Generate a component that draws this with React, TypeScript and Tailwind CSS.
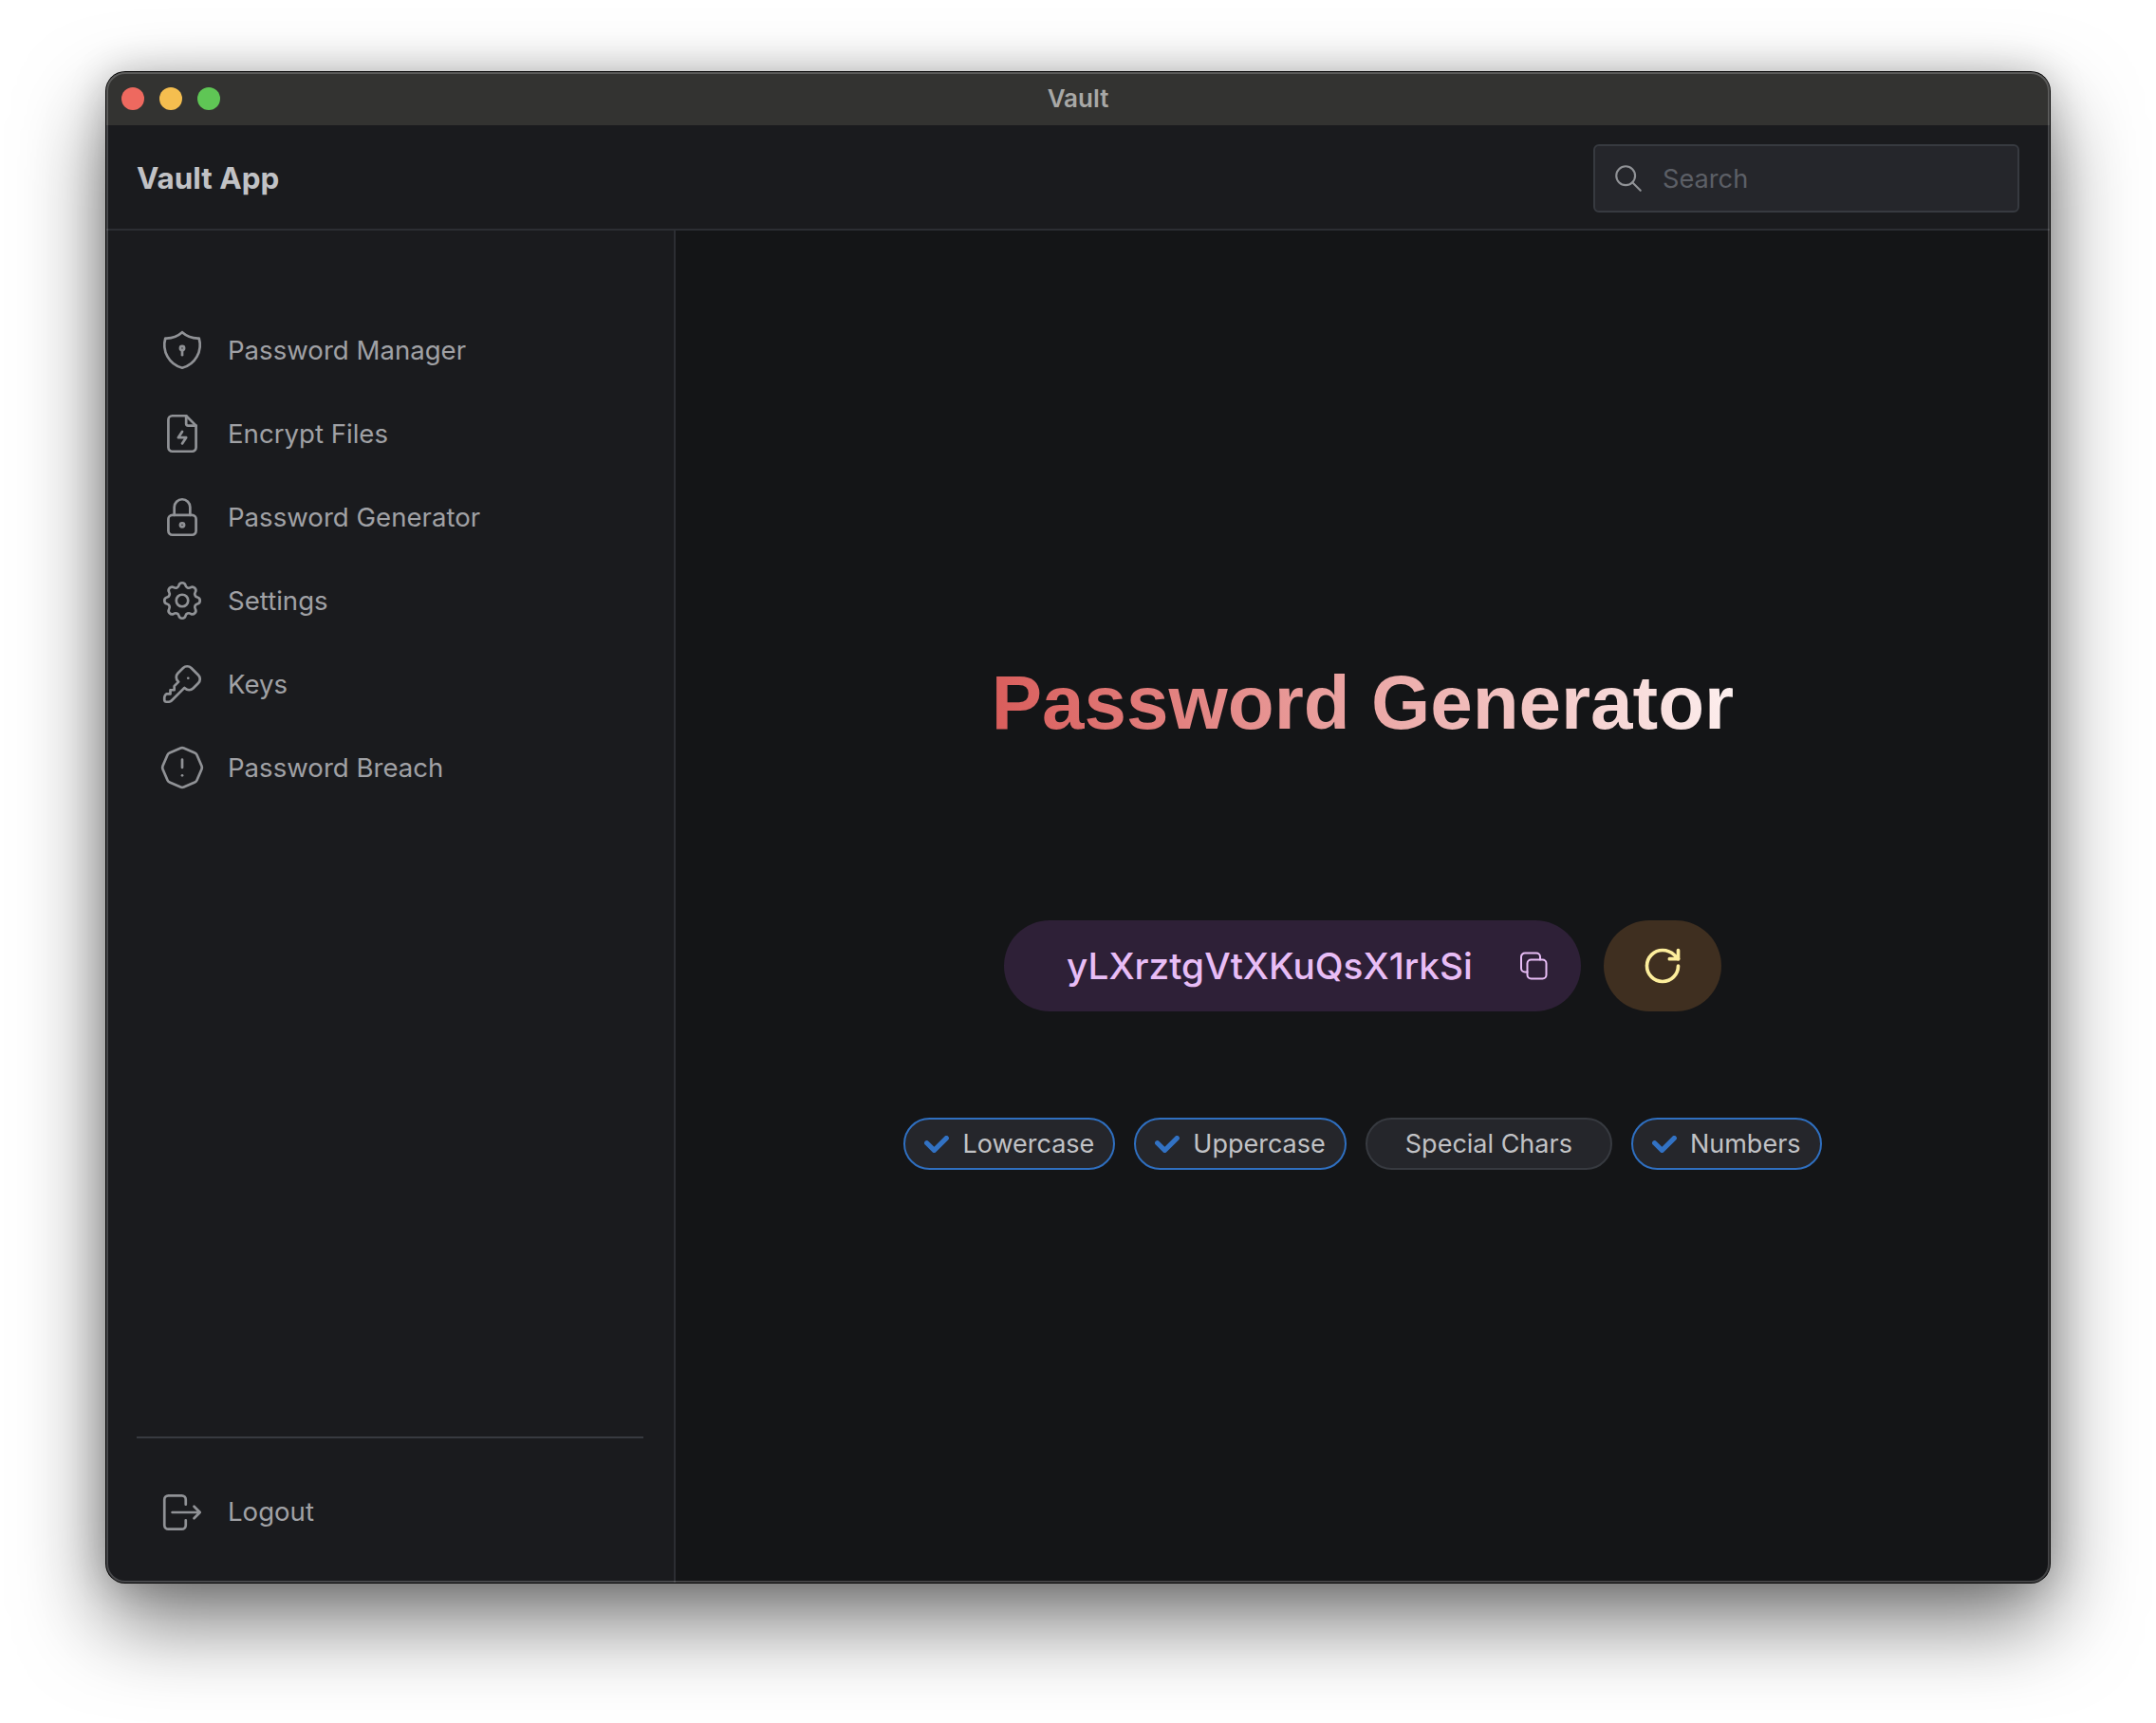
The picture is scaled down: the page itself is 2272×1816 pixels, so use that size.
import React from "react";
import { TbShieldLock, TbLock, TbSettings, TbKey, TbAlertOctagon, TbSearch } from "react-icons/tb";

const FileBolt = ({ className }: { className?: string }) => (
  <svg viewBox="0 0 24 24" fill="none" stroke="currentColor" strokeWidth={1.3} strokeLinecap="round" strokeLinejoin="round" className={className}>
    <path d="M14 3v4a1 1 0 0 0 1 1h4" />
    <path d="M17 21h-10a2 2 0 0 1 -2 -2v-14a2 2 0 0 1 2 -2h7l5 5v11a2 2 0 0 1 -2 2z" />
    <path d="M12 11l-2 3h4l-2 3" />
  </svg>
);

const LogoutIcon = ({ className }: { className?: string }) => (
  <svg viewBox="0 0 24 24" fill="none" stroke="currentColor" strokeWidth={1.3} strokeLinecap="round" strokeLinejoin="round" className={className}>
    <path d="M13.8 8v-2.5a2 2 0 0 0 -2 -2h-6.8a2 2 0 0 0 -2 2v13a2 2 0 0 0 2 2h6.8a2 2 0 0 0 2 -2v-2.5" />
    <path d="M7 12h14l-3 -3m0 6l3 -3" />
  </svg>
);

const CopyIcon = () => (
  <svg viewBox="0 0 30 30" fill="none" stroke="currentColor" strokeWidth={2} strokeLinecap="round" strokeLinejoin="round" className="w-[30px] h-[30px]">
    <rect x="8.5" y="8.5" width="20" height="20" rx="4" />
    <path d="M22 8.5v-3a4 4 0 0 0 -4 -4h-12a4 4 0 0 0 -4 4v12a4 4 0 0 0 4 4h2.5" />
  </svg>
);

const RefreshIcon = () => (
  <svg viewBox="0 0 24 24" fill="none" stroke="currentColor" strokeWidth={2} strokeLinecap="round" strokeLinejoin="round" className="w-[44px] h-[44px]">
    <path d="M21 12a9 9 0 1 1-9-9c2.52 0 4.93 1 6.74 2.74L21 8" />
    <path d="M21 3v5h-5" />
  </svg>
);

const Check = () => (
  <svg viewBox="0 0 10 7" className="w-[26px] h-[18px] shrink-0 text-[#3272c4]" fill="currentColor">
    <path d="M4 4.586L1.707 2.293A1 1 0 10.293 3.707l3 3a.997.997 0 001.414 0l5-5A1 1 0 108.293.293L4 4.586z" />
  </svg>
);

const iconCls = "w-[50px] h-[50px] shrink-0";
const nav = [
  { label: "Password Manager", icon: <TbShieldLock className={iconCls} strokeWidth={1.3} /> },
  { label: "Encrypt Files", icon: <FileBolt className={iconCls} /> },
  { label: "Password Generator", icon: <TbLock className={iconCls} strokeWidth={1.3} /> },
  { label: "Settings", icon: <TbSettings className={iconCls} strokeWidth={1.3} /> },
  { label: "Keys", icon: <TbKey className={iconCls} strokeWidth={1.3} /> },
  { label: "Password Breach", icon: <TbAlertOctagon className={iconCls} strokeWidth={1.3} /> },
];

const NavRow = ({ label, icon }: { label: string; icon: React.ReactNode }) => (
  <div className="h-[88px] flex items-center pl-[23px] gap-[23px] text-[#909296] text-[27.6px]">
    {icon}
    <span className="text-[#a0a1a5] mt-[1px]">{label}</span>
  </div>
);

const Chip = ({ label, on }: { label: string; on?: boolean }) => (
  <div
    className={
      on
        ? "h-[55px] flex items-center gap-[14px] px-[20px] rounded-full bg-[#25262b] border-2 border-[#2f6fc0] text-[27px] text-[#c1c2c5]"
        : "h-[55px] flex items-center px-[40px] rounded-full bg-[#25262b] border-2 border-[#373a40] text-[27px] text-[#c1c2c5]"
    }
  >
    {on && <Check />}
    <span className="mt-[2px]">{label}</span>
  </div>
);

export default function App() {
  return (
    <div className="w-[2272px] h-[1816px] bg-white pl-[112px] pt-[76px] font-['Inter',sans-serif] overflow-hidden">
      <div className="w-[2048px] h-[1592px] rounded-[20px] flex flex-col bg-[#1a1b1e] shadow-[0_0_0_1px_#000,0_40px_90px_rgba(0,0,0,0.55),0_0_40px_rgba(0,0,0,0.2)] relative">
        <div className="absolute inset-0 rounded-[20px] border-2 border-white/20 pointer-events-none z-10" />
        <div className="h-[56px] bg-[#333331] rounded-t-[20px] relative flex items-center justify-center shrink-0">
          <div className="absolute left-[16px] top-[16px] flex gap-[16px]">
            <div className="w-[24px] h-[24px] rounded-full bg-[#ee695f]" />
            <div className="w-[24px] h-[24px] rounded-full bg-[#f5be4f]" />
            <div className="w-[24px] h-[24px] rounded-full bg-[#5fc655]" />
          </div>
          <span className="text-[26px] font-semibold text-[#a8a8a6] -mt-[1px]">Vault</span>
        </div>
        <div className="h-[111px] shrink-0 flex items-center justify-between px-[32px] border-b-2 border-[#2c2e33]">
          <span className="text-[31.4px] font-bold text-[#c1c2c5] mt-[4px]">Vault App</span>
          <div className="w-[449px] h-[72px] mt-[2px] rounded-[6px] bg-[#25262b] border-2 border-[#373a40] flex items-center pl-[18px] gap-[19px]">
            <TbSearch className="w-[34px] h-[34px] text-[#909296]" strokeWidth={1.5} />
            <span className="text-[27.2px] text-[#5c5f66] mt-[3px]">Search</span>
          </div>
        </div>
        <div className="flex-1 flex min-h-0">
          <aside className="w-[600px] shrink-0 border-r-2 border-[#2c2e33] flex flex-col px-[32px] pt-[82px] rounded-bl-[20px]">
            {nav.map((n) => (
              <NavRow key={n.label} {...n} />
            ))}
            <div className="mt-auto border-t-2 border-[#373a40] pt-[34px] pb-[30px]">
              <div className="h-[88px] flex items-center pl-[23px] gap-[23px] text-[#909296] text-[27.6px]">
                <LogoutIcon className={iconCls} />
                <span className="text-[#a0a1a5]">Logout</span>
              </div>
            </div>
          </aside>
          <main className="flex-1 bg-[#141517] rounded-br-[20px] flex flex-col items-center justify-start pt-[448px]">
            <h1 className="font-['Liberation_Sans',sans-serif] font-bold text-[80px] leading-[100px] bg-[linear-gradient(82deg,#d95c5a,#fdf0ef)] bg-clip-text text-transparent">
              Password Generator
            </h1>
            <div className="mt-[179px] flex items-center gap-[24px]">
              <div className="w-[608px] h-[96px] rounded-full bg-[#2e2037] flex items-center pl-[66px] text-[#e8bdf6]">
                <span className="text-[38.8px] font-medium w-[428px] whitespace-nowrap">yLXrztgVtXKuQsX1rkSi</span>
                <span className="ml-[49px]"><CopyIcon /></span>
              </div>
              <div className="w-[124px] h-[96px] rounded-full bg-[#3f2f20] flex items-center justify-center text-[#fdee9c]">
                <RefreshIcon />
              </div>
            </div>
            <div className="mt-[112px] flex items-center gap-[20px]">
              <Chip label="Lowercase" on />
              <Chip label="Uppercase" on />
              <Chip label="Special Chars" />
              <Chip label="Numbers" on />
            </div>
          </main>
        </div>
      </div>
    </div>
  );
}
